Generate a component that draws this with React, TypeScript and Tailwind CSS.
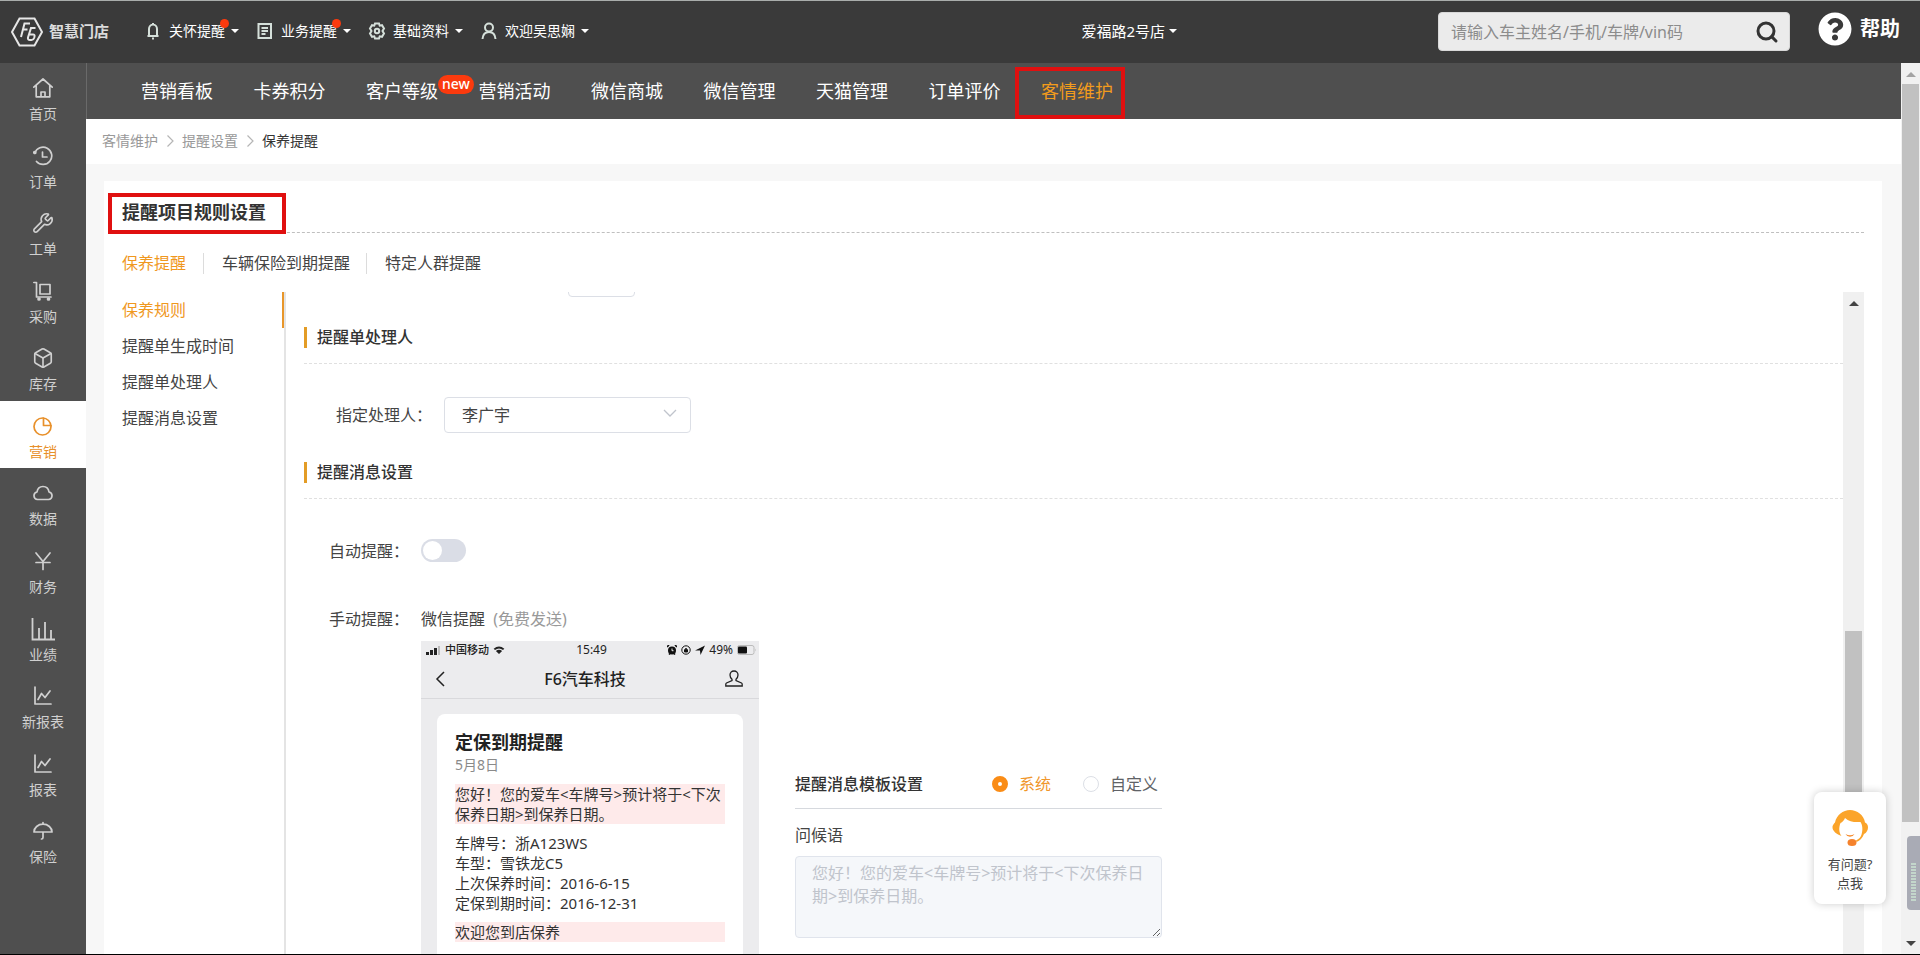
import React, { useState } from "react";
import clsx from "clsx";
import { Box, Search, Wrench } from "lucide-react";
import { FaQuestionCircle } from "react-icons/fa";

const GREETING = "您好！您的爱车<车牌号>预计将于<下次保养日期>到保养日期。";

type IconProps = { children: React.ReactNode };

const LineIcon: React.FC<IconProps> = ({ children }) => (
  <svg
    viewBox="0 0 20 20"
    className="h-5 w-5"
    fill="none"
    stroke="currentColor"
    strokeWidth="1.7"
    strokeLinecap="round"
    strokeLinejoin="round"
  >
    {children}
  </svg>
);

const chartIcon = (
  <LineIcon>
    <path d="M2 1v17h16M5 13.5l3.5-6 3.5 4 5-6.5" />
  </LineIcon>
);

const sideItems = [
  {
    label: "首页",
    icon: (
      <LineIcon>
        <path d="M.8 9.2 10 1l9.2 8.2M3.2 7.500v11.300h13.600V7.500M8 18.500v-4.500h4v4.500" />
      </LineIcon>
    ),
  },
  {
    label: "订单",
    icon: (
      <LineIcon>
        <path d="M1.800 7A8.700 8.700 0 1 1 3.500 15.500M9.500 6v5h4.500" />
        <circle cx="1.800" cy="6.500" r="1" fill="currentColor" />
      </LineIcon>
    ),
  },
  { label: "工单", icon: <Wrench className="h-[22px] w-[22px]" strokeWidth={1.8} /> },
  {
    label: "采购",
    icon: (
      <LineIcon>
        <path d="M.8 1.500H3.500V16H18M7 3.500h10v9.500H7z" />
        <circle cx="6" cy="18" r="1" fill="currentColor" />
        <circle cx="15.500" cy="18" r="1" fill="currentColor" />
      </LineIcon>
    ),
  },
  { label: "库存", icon: <Box className="h-[22px] w-[22px]" strokeWidth={1.8} /> },
  {
    label: "营销",
    active: true,
    icon: (
      <LineIcon>
        <circle cx="9.500" cy="10.500" r="8.500" />
        <path d="M10.500 2v7.500h7.500" />
      </LineIcon>
    ),
  },
  {
    label: "数据",
    icon: (
      <LineIcon>
        <path d="M4.500 16.500A3.800 3.800 0 0 1 4 9c.5-3.500 3-5.500 6-5.500S15.500 5.500 16 9a3.800 3.800 0 0 1-.5 7.500z" />
      </LineIcon>
    ),
  },
  {
    label: "财务",
    icon: (
      <LineIcon>
        <path d="M3 2l7 8.500L17 2M3 11.500h14M10 10.500V18.500" />
      </LineIcon>
    ),
  },
  {
    label: "业绩",
    icon: (
      <svg viewBox="0 0 24 24" className="h-6 w-6" fill="none" stroke="currentColor" strokeWidth="1.8">
        <path d="M1.500 1v21.500H24M8 22V11M14 22V5M20 22v-9" />
      </svg>
    ),
  },
  { label: "新报表", icon: chartIcon },
  { label: "报表", icon: chartIcon },
  {
    label: "保险",
    icon: (
      <LineIcon>
        <path d="M1 11a9 7.800 0 0 1 18 0zM10 3V1.500M10 11v5.500a1.500 1.500 0 0 1-1.500 1.500" />
      </LineIcon>
    ),
  },
];

const topItems = [
  {
    label: "关怀提醒",
    dot: true,
    icon: <path d="M5 14V7a4 4.500 0 0 1 8 0v7zM3.500 14h11M9 2.500V1M8 16.500h2" />,
  },
  {
    label: "业务提醒",
    dot: true,
    icon: <path d="M2.500 2h12.500v14H2.500zM5.500 6h6.500M5.500 9h6.500M5.500 12h4" />,
  },
  {
    label: "基础资料",
    icon: (
      <>
        <path d="M7 1.500h4l.7 2.200 2.300-.5 2 3.300L14.500 9l1.500 2.500-2 3.300-2.300-.5-.7 2.200H7l-.7-2.200-2.300.5-2-3.300L3.500 9 2 6.500l2-3.300 2.300.5z" />
        <circle cx="9" cy="9" r="2.200" />
      </>
    ),
  },
  {
    label: "欢迎吴思娴",
    icon: (
      <>
        <circle cx="9" cy="5.500" r="4" />
        <path d="M2.500 17c.3-4 2.500-7 6.500-7s6.200 3 6.500 7" />
      </>
    ),
  },
];

const navItems = [
  "营销看板",
  "卡券积分",
  "客户等级",
  "营销活动",
  "微信商城",
  "微信管理",
  "天猫管理",
  "订单评价",
  "客情维护",
];

const tabs = ["保养提醒", "车辆保险到期提醒", "特定人群提醒"];
const menuItems = ["保养规则", "提醒单生成时间", "提醒单处理人", "提醒消息设置"];

const Caret: React.FC = () => (
  <svg viewBox="0 0 8 4" className="h-1 w-2" fill="currentColor">
    <path d="M0 0h8L4 4z" />
  </svg>
);

const CrumbArrow: React.FC = () => (
  <svg viewBox="0 0 16 14" className="h-3.5 w-4" fill="none" stroke="#b5b5b5" strokeWidth="1.2">
    <path d="M5.5 1.500 11 7l-5.500 5.500" />
  </svg>
);

const TopBar: React.FC = () => (
  <header className="flex h-[63px] shrink-0 items-center border-t border-[#a9adab] bg-[#3a3a3a] pr-5 pl-[11px] text-white">
    <a href="#" className="flex items-center gap-1.5 pb-px" aria-label="智慧门店">
      <svg viewBox="0 0 32 30" className="h-[30px] w-8" fill="none" stroke="#e6e6e6">
        <path d="M8.500 1.500h15L31 15l-7.500 13.500h-15L1 15z" strokeWidth="2" />
        <path d="M10 20l3.500-13.500H19M12 12.500h4.500" strokeWidth="2" />
        <path d="M24.500 11h-4.500l-3 9.500q-.5 2.500 2 2.500h1.500q2 0 2.600-2l.4-1.500q.5-2-1.500-2h-3.500" strokeWidth="2" />
      </svg>
      <span className="text-[15px] font-bold text-[#dcdcdc]">智慧门店</span>
    </a>
    <nav className="ml-[35px] flex items-center gap-[17px] pb-0.5">
      {topItems.map((item) => (
        <button key={item.label} type="button" className="flex items-center text-sm">
          <svg
            viewBox="0 0 18 18"
            className="mr-[7px] h-[18px] w-[18px] text-[#d5e0da]"
            fill="none"
            stroke="currentColor"
            strokeWidth="2"
          >
            {item.icon}
          </svg>
          <span className="relative mr-1.5">
            {item.label}
            {item.dot && (
              <span className="absolute -top-0.5 -right-1 h-[9px] w-[9px] rounded-full bg-[#fb3a0e]" />
            )}
          </span>
          <Caret />
        </button>
      ))}
    </nav>
    <button type="button" className="mr-[261px] ml-auto flex items-center gap-1 pb-0.5 text-[15px]">
      爱福路2号店
      <Caret />
    </button>
    <form className="mb-px flex h-[39px] w-[352px] items-center rounded border border-[#d8d8d8] bg-[#ebebeb] pr-2.5 pl-3">
      <input
        type="text"
        aria-label="搜索"
        placeholder="请输入车主姓名/手机/车牌/vin码"
        className="min-w-0 flex-1 bg-transparent text-base outline-none placeholder:text-[#8c8c8c]"
      />
      <button type="button" aria-label="查询">
        <Search className="h-6 w-6 text-[#333]" strokeWidth={3} />
      </button>
    </form>
    <a href="#" className="ml-7 flex items-center gap-2 pb-1.5 text-xl font-bold">
      <FaQuestionCircle className="h-[34px] w-[34px]" />
      帮助
    </a>
  </header>
);

const SideBar: React.FC = () => (
  <aside className="w-[86px] shrink-0 bg-[#4f4f4f]">
    <nav className="flex h-[811px] flex-col">
      {sideItems.map((item) => (
        <a
          key={item.label}
          href="#"
          className={clsx(
            "flex flex-1 flex-col items-center pt-[3px] text-sm",
            item.active ? "bg-white text-[#e8902a]" : "text-[#d0d0d0]",
          )}
        >
          <span className="flex h-11 items-center">{item.icon}</span>
          <span className="-mt-1.5 leading-5">{item.label}</span>
        </a>
      ))}
    </nav>
  </aside>
);

const SectionTitle: React.FC<{ children: string }> = ({ children }) => (
  <div className="border-b border-dashed border-[#e0e0e0] pb-[15px]">
    <h2 className="border-l-[3px] border-[#e39c26] pl-2.5 text-base leading-[21px] font-medium text-[#333]">
      {children}
    </h2>
  </div>
);

const PhonePreview: React.FC = () => (
  <div className="h-[440px] w-[338px] shrink-0 bg-[#ececee] px-4 text-[#222]">
    <div className="-mx-4 border-b border-[#d9d9dc]">
      <div className="flex h-[18px] items-center justify-between pr-0.5 pl-[5px] text-xs">
        <div className="flex w-[110px] items-center gap-1">
          <svg viewBox="0 0 15 9" className="h-[9px] w-[15px]">
            <path d="M0 6h3v3H0zM4 4h3v5H4zM8 2h3v7H8z" fill="#222" />
            <path d="M12 0h2v9h-2z" fill="#bbb" />
          </svg>
          <span className="text-[11px] font-medium">中国移动</span>
          <svg viewBox="0 0 12 9" className="h-2 w-3">
            <path d="M0 3Q6-2 12 3L10.500 4.500Q6 1 1.500 4.500zM2.500 5.500Q6 3 9.500 5.500L6 9z" fill="#222" />
          </svg>
        </div>
        <span>15:49</span>
        <div className="flex w-[110px] items-center justify-end gap-1">
          <svg viewBox="0 0 10 10" className="h-2.5 w-2.5">
            <circle cx="5" cy="5.500" r="4" fill="#111" />
            <path d="M0 2l2-2M10 2L8 0M2 9.500l1-1M8 9.500l-1-1" stroke="#111" strokeWidth="1.600" />
            <path d="M5 3.500v2.200h1.500" stroke="#eee" fill="none" />
          </svg>
          <svg viewBox="0 0 10 10" className="h-2.5 w-2.5" fill="none" stroke="#111">
            <circle cx="5" cy="5" r="4.200" />
            <path d="M3.500 4.800h3V7h-3zM4 4.500q1-2.500 2 0" fill="#111" />
          </svg>
          <svg viewBox="0 0 10 10" className="h-2.5 w-2.5" fill="#111">
            <path d="M0 5.500L10 .5 5.500 10 5 5.500z" />
          </svg>
          <span>49%</span>
          <svg viewBox="0 0 20 10" className="h-2.5 w-5">
            <rect x=".5" y=".5" width="16.500" height="9" rx="2" fill="none" stroke="#bbb" />
            <rect x="1" y="1.500" width="9" height="7" rx="1" fill="#111" />
            <path d="M18 3.500q1.500 1.500 0 3z" fill="#bbb" />
          </svg>
        </div>
      </div>
      <div className="flex h-[39px] items-center justify-between pr-4 pl-3.5">
        <svg viewBox="0 0 10 16" className="h-4 w-2.5" fill="none" stroke="#222" strokeWidth="1.500">
          <path d="M9 1 2 8l7 7" />
        </svg>
        <span className="font-medium">F6汽车科技</span>
        <svg viewBox="0 0 18 17" className="h-[17px] w-[18px]" fill="none" stroke="#222" strokeWidth="1.300">
          <path d="M9 1c-2.500 0-4 1.700-4 4 0 1.700.8 3.200 2 4.200v1.300L1.500 13c-.5.3-.7.8-.7 1.500V16h16.400v-1.500c0-.7-.2-1.200-.7-1.500L11 10.500V9.200c1.200-1 2-2.500 2-4.200 0-2.300-1.500-4-4-4z" />
        </svg>
      </div>
    </div>
    <article className="mt-[15px] h-[360px] rounded-lg bg-white px-[18px] pt-4 text-[15px] leading-5 text-[#333]">
      <h3 className="text-lg leading-6 font-bold text-[#222]">定保到期提醒</h3>
      <p className="text-sm leading-[22px] text-[#8a8a8a]">5月8日</p>
      <p className="mt-2 bg-[#feeaea] whitespace-nowrap">
        {"您好！您的爱车<车牌号>预计将于<下次"}
        <br />
        {"保养日期>到保养日期。"}
      </p>
      <ul className="my-[9px]">
        <li>车牌号：浙A123WS</li>
        <li>车型：雪铁龙C5</li>
        <li>上次保养时间：2016-6-15</li>
        <li>定保到期时间：2016-12-31</li>
      </ul>
      <p className="bg-[#feeaea]">欢迎您到店保养</p>
    </article>
  </div>
);

const TemplateForm: React.FC = () => {
  const [mode, setMode] = useState("system");
  const options = [
    { value: "system", label: "系统" },
    { value: "custom", label: "自定义" },
  ];

  return (
    <div className="w-[367px] pt-[131px] text-base leading-6">
      <div className="flex items-center border-b border-[#d6d9de] pb-3">
        <h3 className="mr-auto font-medium text-[#333]">提醒消息模板设置</h3>
        <div className="flex gap-8 pr-1">
          {options.map((o) => (
            <label
              key={o.value}
              className={clsx(
                "flex items-center gap-[11px]",
                mode === o.value ? "text-[#f0962a]" : "text-[#606266]",
              )}
            >
              <input
                type="radio"
                name="template"
                checked={mode === o.value}
                onChange={() => setMode(o.value)}
                className="h-4 w-4 appearance-none rounded-full border border-[#dcdfe6] bg-white checked:border-[6px] checked:border-[#fa8c16]"
              />
              {o.label}
            </label>
          ))}
        </div>
      </div>
      <label htmlFor="greeting" className="mt-3.5 block text-[#444]">
        问候语
      </label>
      <textarea
        id="greeting"
        readOnly
        value={GREETING}
        className="mt-[9px] block h-[82px] w-full rounded border border-[#e0e4ec] bg-[#f5f7fa] px-4 py-[5px] leading-[23px] text-[#c0c4cc] outline-none"
      />
    </div>
  );
};

const ReminderSettings: React.FC = () => {
  const [auto, setAuto] = useState(false);

  return (
    <div className="min-w-0 flex-1 overflow-hidden pl-[18px] text-base leading-6 text-[#444]">
      <input
        type="text"
        aria-label="提前天数"
        className="-mt-[27px] ml-[264px] block h-8 w-[67px] rounded border border-[#dcdfe6]"
      />
      <div className="mt-[30px]">
        <SectionTitle>提醒单处理人</SectionTitle>
      </div>
      <div className="mt-[33px] mb-[29px] flex items-center pl-8">
        <label htmlFor="handler" className="w-[108px]">
          指定处理人：
        </label>
        <div className="relative">
          <select
            id="handler"
            className="h-9 w-[247px] appearance-none rounded border border-[#dcdfe6] bg-white px-[17px] text-[#444]"
          >
            <option>李广宇</option>
          </select>
          <svg
            viewBox="0 0 14 8"
            className="pointer-events-none absolute top-3 right-3.5 h-2 w-3.5"
            fill="none"
            stroke="#c0c4cc"
            strokeWidth="1.300"
          >
            <path d="M1 1l6 6 6-6" />
          </svg>
        </div>
      </div>
      <SectionTitle>提醒消息设置</SectionTitle>
      <div className="mt-10 flex h-[23px] items-center pl-[25px]">
        <label htmlFor="auto" className="w-[92px]">
          自动提醒：
        </label>
        <button
          id="auto"
          type="button"
          role="switch"
          aria-checked={auto}
          onClick={() => setAuto(!auto)}
          className={clsx(
            "flex h-[23px] w-[45px] items-center rounded-full px-0.5",
            auto ? "justify-end bg-[#fa8c16]" : "bg-[#dadde6]",
          )}
        >
          <span className="h-[19px] w-[19px] rounded-full bg-white" />
        </button>
      </div>
      <div className="mt-[45px] flex pl-[25px]">
        <span className="w-[92px] shrink-0">手动提醒：</span>
        <div>
          <p>
            微信提醒 <span className="ml-1 text-[#999]">(免费发送)</span>
          </p>
          <div className="mt-2.5 flex gap-9">
            <PhonePreview />
            <TemplateForm />
          </div>
        </div>
      </div>
    </div>
  );
};

const HelpWidget: React.FC = () => (
  <button
    type="button"
    className="absolute right-[34px] bottom-[51px] flex h-28 w-[72px] flex-col items-center rounded-lg bg-white pt-[18px] text-[13px] leading-[19px] text-[#444] shadow-[0_0_8px_rgba(0,0,0,0.2)]"
  >
    <svg viewBox="0 0 36 37" className="mb-2 h-[37px] w-9">
      <path
        d="M9.500 26C5 24.500 0 21 .5 16.500 1 14.500 2 13.500 3 12.500 4.500 5 11 0 18 0s14 5 15 12.500c2 1 3 2.500 3 5s-1.500 5.500-4 6.500c-1.500 4-4 6.500-7.500 8l-.5-1.500c3-1.500 5-3.500 5.500-6C31 20 30.500 15 28.500 12 22 12.500 17 11.500 13 8c-1 2.500-2.500 4-4.500 5-2 5-1.500 9.500 1 13z"
        fill="#fba42a"
      />
      <path d="M13.500 24q4.500 2.500 9 0-1.500 2.800-4.500 2.800T13.500 24z" fill="#f58a2c" />
      <ellipse cx="20" cy="32.500" rx="4.500" ry="3.500" fill="#f5822c" />
    </svg>
    <span>有问题?</span>
    <span>点我</span>
  </button>
);

export default function App() {
  return (
    <div className="relative flex h-screen flex-col overflow-hidden bg-[#f7f7f7] font-['Noto_Sans','Noto_Sans_CJK_SC',sans-serif]">
      <TopBar />
      <div className="flex min-h-0 flex-1">
        <SideBar />
        <main className="flex min-w-0 flex-1 flex-col">
          <nav className="flex h-14 shrink-0 items-center border-l border-[#6a6a6a] bg-[#4f4f4f] pl-[54px]">
            <div className="flex w-[972px] justify-between text-lg text-white">
              {navItems.map((item) => (
                <a
                  key={item}
                  href="#"
                  className={clsx("relative", item === "客情维护" && "text-[#f39c1c]")}
                >
                  {item}
                  {item === "客户等级" && (
                    <span className="absolute -top-0.5 left-full h-[19px] w-9 rounded-full bg-[#fb3a0e] text-center text-sm leading-[17px] font-medium">
                      new
                    </span>
                  )}
                  {item === "客情维护" && (
                    <span className="absolute -top-2.5 -right-3 -bottom-3.5 -left-[26px] border-4 border-[#e01010]" />
                  )}
                </a>
              ))}
            </div>
          </nav>
          <nav className="flex h-[45px] shrink-0 items-center gap-1 bg-white pb-0.5 pl-4 text-sm text-[#999]">
            <a href="#">客情维护</a>
            <CrumbArrow />
            <a href="#">提醒设置</a>
            <CrumbArrow />
            <span className="text-[#333]">保养提醒</span>
          </nav>
          <section className="mt-[17px] mr-[19px] ml-[18px] flex min-h-0 flex-1 flex-col bg-white px-[18px]">
            <div className="flex h-[52px] shrink-0 items-start border-b border-dashed border-[#bfbfbf]">
              <h1 className="relative pt-[18px] text-lg leading-[26px] font-bold text-[#333]">
                提醒项目规则设置
                <span className="absolute -right-5 -bottom-[9px] -left-3.5 h-[41px] border-4 border-[#e01010]" />
              </h1>
            </div>
            <div className="flex shrink-0 pt-5 pb-[18px] text-base leading-[21px] text-[#444]">
              {tabs.map((tab, i) => (
                <button
                  key={tab}
                  type="button"
                  className={clsx(
                    i === 0 ? "pr-[17px] text-[#f0981e]" : "border-l border-[#dcdcdc] pr-4 pl-[18px]",
                  )}
                >
                  {tab}
                </button>
              ))}
            </div>
            <div className="flex min-h-0 flex-1">
              <ul className="w-[164px] shrink-0 border-r-2 border-[#e4e4e4] text-base leading-9 text-[#444]">
                {menuItems.map((item, i) => (
                  <li key={item} className={clsx(i === 0 && "border-r-2 border-[#e8962a] text-[#f0981e]")}>
                    <a href="#">{item}</a>
                  </li>
                ))}
              </ul>
              <ReminderSettings />
              <div className="flex w-[21px] shrink-0 flex-col items-center bg-[#f0f0f0] pt-[9px]">
                <svg viewBox="0 0 10 5" className="h-[5px] w-2.5" fill="#444">
                  <path d="M0 5h10L5 0z" />
                </svg>
                <div className="mt-[325px] h-[200px] w-[17px] bg-[#c1c1c1]" />
              </div>
            </div>
          </section>
        </main>
        <div className="flex w-[19px] shrink-0 flex-col items-center bg-[#f1f1f1] pt-[9px]">
          <svg viewBox="0 0 10 5" className="h-[5px] w-2.5" fill="#a3a3a3">
            <path d="M0 5h10L5 0z" />
          </svg>
          <div className="mt-[7px] h-[738px] w-[17px] bg-[#c1c1c1]" />
          <div className="mt-3.5 ml-1.5 h-[74px] w-[13px] rounded-l bg-[#a9abb5] pt-[26px] pr-1 pl-1">
            <div className="h-10 bg-[repeating-linear-gradient(to_bottom,#a9abb5_0_1px,#c3d6cb_1px_3px)]" />
          </div>
          <svg viewBox="0 0 10 5" className="mt-auto mb-2 h-[5px] w-2.5" fill="#444">
            <path d="M0 0h10L5 5z" />
          </svg>
        </div>
      </div>
      <div className="h-px shrink-0 bg-black" />
      <HelpWidget />
    </div>
  );
}
